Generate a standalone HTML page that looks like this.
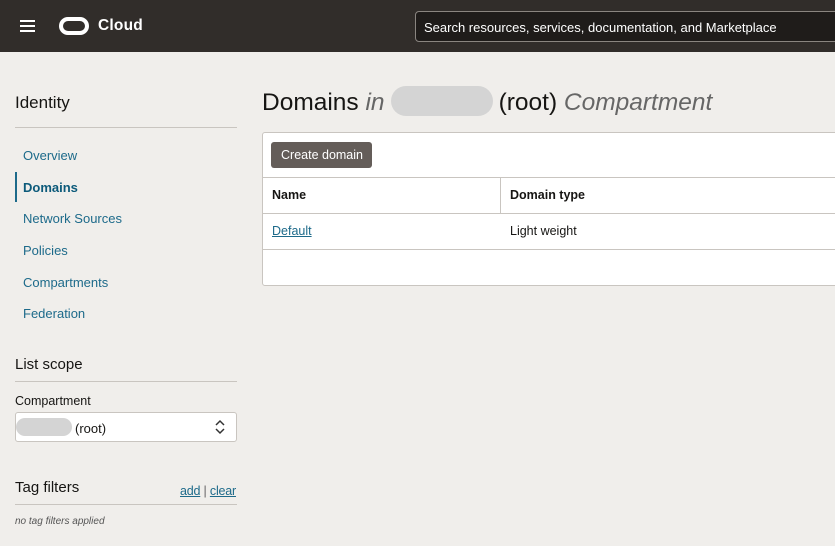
<!DOCTYPE html>
<html><head><style>
*{box-sizing:border-box;margin:0;padding:0}
body{width:835px;height:546px;overflow:hidden;background:#f0eeeb;font-family:"Liberation Sans",Arial,sans-serif;position:relative;color:#161513}
.hdr{position:absolute;left:0;top:0;width:835px;height:52px;background:#312d2a}
.abs{position:absolute}
.nav a{position:absolute;left:23px;font-size:13px;color:#1d6a8a;text-decoration:none}
.line{position:absolute;height:1px;background:#c9c5c0}
</style></head><body>
<div class="hdr">
 <div class="abs" style="left:20px;top:20px;width:15px;height:2px;background:#fff;box-shadow:0 5px 0 #fff,0 10px 0 #fff"></div>
 <div class="abs" style="left:59px;top:17px;width:30px;height:18px;border:4px solid #fff;border-radius:9px"></div>
 <div class="abs" style="left:98px;top:17px;color:#fff;font-size:15.5px;font-weight:bold;letter-spacing:0.2px">Cloud</div>
 <div class="abs" style="left:415px;top:11px;width:425px;height:31px;border:1px solid #8a8580;border-radius:4px;background:#1f1c1a;color:#fff;font-size:13px;padding:8px 0 0 8px">Search resources, services, documentation, and Marketplace</div>
</div>
<div class="abs" style="left:15px;top:93px;font-size:17px">Identity</div>
<div class="line" style="left:15px;top:127px;width:222px"></div>
<div class="nav">
<a style="top:148px">Overview</a>
<a style="top:180px;font-weight:bold;color:#0c5a7a">Domains</a>
<a style="top:211px">Network Sources</a>
<a style="top:243px">Policies</a>
<a style="top:275px">Compartments</a>
<a style="top:306px">Federation</a>
</div>
<div class="abs" style="left:15px;top:172px;width:2px;height:30px;background:#1d6a8a"></div>
<div class="abs" style="left:15px;top:356px;font-size:15px">List scope</div>
<div class="line" style="left:15px;top:381px;width:222px"></div>
<div class="abs" style="left:15px;top:394px;font-size:12.5px">Compartment</div>
<div class="abs" style="left:15px;top:412px;width:222px;height:30px;background:#fff;border:1px solid #c9c5c0;border-radius:3px"></div>
<div class="abs" style="left:16px;top:418px;width:56px;height:18px;background:#d4d4d4;border-radius:9px"></div>
<div class="abs" style="left:75px;top:421px;font-size:13px">(root)</div>
<svg class="abs" style="left:214px;top:419px" width="12" height="16" viewBox="0 0 12 16"><path d="M2 6 L6 2 L10 6 M2 10 L6 14 L10 10" fill="none" stroke="#333" stroke-width="1.5"/></svg>
<div class="abs" style="left:15px;top:479px;font-size:15px">Tag filters</div>
<div class="abs" style="left:180px;top:484px;font-size:12.5px;color:#1d6a8a;letter-spacing:-0.2px"><u>add</u> <span style="color:#666">|</span> <u>clear</u></div>
<div class="line" style="left:15px;top:504px;width:222px"></div>
<div class="abs" style="left:15px;top:516px;font-size:10px;font-style:italic;color:#555">no tag filters applied</div>

<div class="abs" style="left:262px;top:86px;font-size:24.5px;white-space:nowrap">Domains <i style="color:#666">in</i><span style="display:inline-block;width:102px;height:30px;background:#d4d4d4;border-radius:15px;vertical-align:-6px;margin:0 6px 0 6px"></span>(root) <i style="color:#666">Compartment</i></div>
<div class="abs" style="left:262px;top:132px;width:580px;height:154px;background:#fff;border:1px solid #c9c5c0;border-radius:3px"></div>
<div class="abs" style="left:271px;top:142px;width:101px;height:26px;background:#645d59;border-radius:3px;color:#fff;font-size:12.5px;padding:6px 0 0 10px">Create domain</div>
<div class="line" style="left:263px;top:177px;width:572px"></div>
<div class="line" style="left:263px;top:213px;width:572px"></div>
<div class="line" style="left:263px;top:249px;width:572px"></div>
<div class="abs" style="left:500px;top:178px;width:1px;height:35px;background:#c9c5c0"></div>
<div class="abs" style="left:272px;top:188px;font-size:12.5px;font-weight:bold">Name</div>
<div class="abs" style="left:510px;top:188px;font-size:12.5px;font-weight:bold">Domain type</div>
<div class="abs" style="left:272px;top:224px;font-size:12.5px;color:#1d6a8a;text-decoration:underline">Default</div>
<div class="abs" style="left:510px;top:224px;font-size:12.5px">Light weight</div>
</body></html>
